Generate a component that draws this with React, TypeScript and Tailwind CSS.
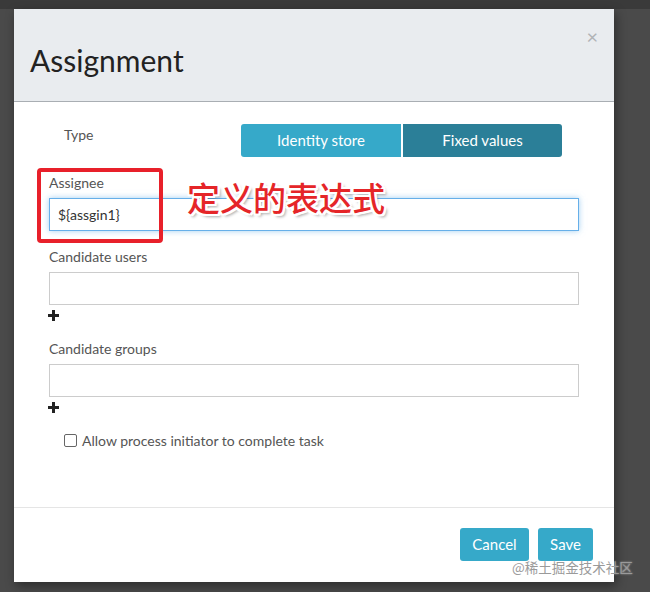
import React from "react";

const lato = { fontFamily: "Lato, 'Liberation Sans', sans-serif" } as const;

function Field({ label, value, focused }: { label: string; value?: string; focused?: boolean }) {
  return (
    <div className="flex flex-col">
      <label className="h-[20px] leading-[20px] text-[14px] text-[#555]">{label}</label>
      <div
        className={
          focused
            ? "mt-[5px] h-[33px] w-[530px] border border-[#66afe9] shadow-[0_0_6px_rgba(102,175,233,0.6)] flex items-center px-[8px] text-[14px] text-[#333]"
            : "mt-[5px] h-[33px] w-[530px] border border-[#cccccc] flex items-center px-[8px] text-[14px] text-[#333]"
        }
      >
        {value}
      </div>
    </div>
  );
}

function Plus() {
  return (
    <div className="h-[20px] flex items-center">
      <svg width="11" height="11" viewBox="0 0 11 11" className="ml-[-1px]">
        <rect x="4" y="0" width="3" height="11" fill="#222" />
        <rect x="0" y="4" width="11" height="3" fill="#222" />
      </svg>
    </div>
  );
}

export default function App() {
  return (
    <div className="relative w-[650px] h-[592px] bg-[#4a4a4a] overflow-hidden" style={lato}>
      <div className="h-[9px] bg-[#3a3a3a]" />
      <div className="relative ml-[14px] w-[600px] h-[573px] bg-white flex flex-col shadow-[2px_4px_10px_rgba(0,0,0,0.4)]">
        <div className="h-[93px] bg-[#e9ecef] border-b border-[#a9aeb3] flex items-start justify-between pl-[16px] pr-[16px] pt-[33px]">
          <h1 className="text-[30px] leading-[36px] text-[#222]">Assignment</h1>
          <span className="mt-[-16px] text-[20px] leading-[20px] text-[#b0b3b6]">×</span>
        </div>

        <div className="flex-1 flex flex-col pl-[35px]">
          <div className="mt-[22px] flex items-start">
            <span className="ml-[15px] mt-[1px] w-[177px] text-[14px] leading-[20px] text-[#555]">Type</span>
            <div className="flex gap-[2px]">
              <button className="w-[160px] h-[33px] rounded-l-[3px] bg-[#36a9c9] text-white text-[15px]">
                Identity store
              </button>
              <button className="w-[159px] h-[33px] rounded-r-[3px] bg-[#2b7f98] text-white text-[15px]">
                Fixed values
              </button>
            </div>
          </div>

          <div className="mt-[16px]">
            <Field label="Assignee" value="${assgin1}" focused />
          </div>
          <div className="mt-[16px]">
            <Field label="Candidate users" />
            <Plus />
          </div>
          <div className="mt-[14px]">
            <Field label="Candidate groups" />
            <Plus />
          </div>
          <div className="mt-[14px] ml-[15px] flex items-center gap-[5px] h-[18px]">
            <span className="w-[13px] h-[13px] border border-[#666] rounded-[2px] bg-white" />
            <span className="text-[14px] text-[#555]">Allow process initiator to complete task</span>
          </div>
        </div>

        <div className="h-[75px] border-t border-[#e5e5e5] flex justify-end items-start pt-[20px] pr-[21px] gap-[9px]">
          <button className="w-[69px] h-[33px] rounded-[3px] bg-[#36a9c9] text-white text-[15px]">Cancel</button>
          <button className="w-[55px] h-[33px] rounded-[3px] bg-[#36a9c9] text-white text-[15px]">Save</button>
        </div>

        <div className="absolute left-[23px] top-[159px] w-[126px] h-[75px] border-[4px] border-[#e8202a] rounded-[4px]" />
        <div
          className="absolute left-[173px] top-[169px] text-[33px] leading-[38px] font-medium text-[#e52528]"
          style={{
            fontFamily: "'Noto Sans CJK SC', sans-serif",
            textShadow:
              "2px 0 0 #fff, -2px 0 0 #fff, 0 2px 0 #fff, 0 -2px 0 #fff, 2px 2px 0 #fff, -2px -2px 0 #fff, 2px -2px 0 #fff, -2px 2px 0 #fff, 3px 3px 3px rgba(0,0,0,0.35)",
          }}
        >
          定义的表达式
        </div>
      </div>

      <div
        className="absolute left-[512px] top-[557px] text-[13.5px] text-[#9a9a9a]"
        style={{ fontFamily: "'Noto Sans CJK SC', sans-serif", textShadow: "0 0 2px rgba(255,255,255,0.6)" }}
      >
        @稀土掘金技术社区
      </div>
    </div>
  );
}
